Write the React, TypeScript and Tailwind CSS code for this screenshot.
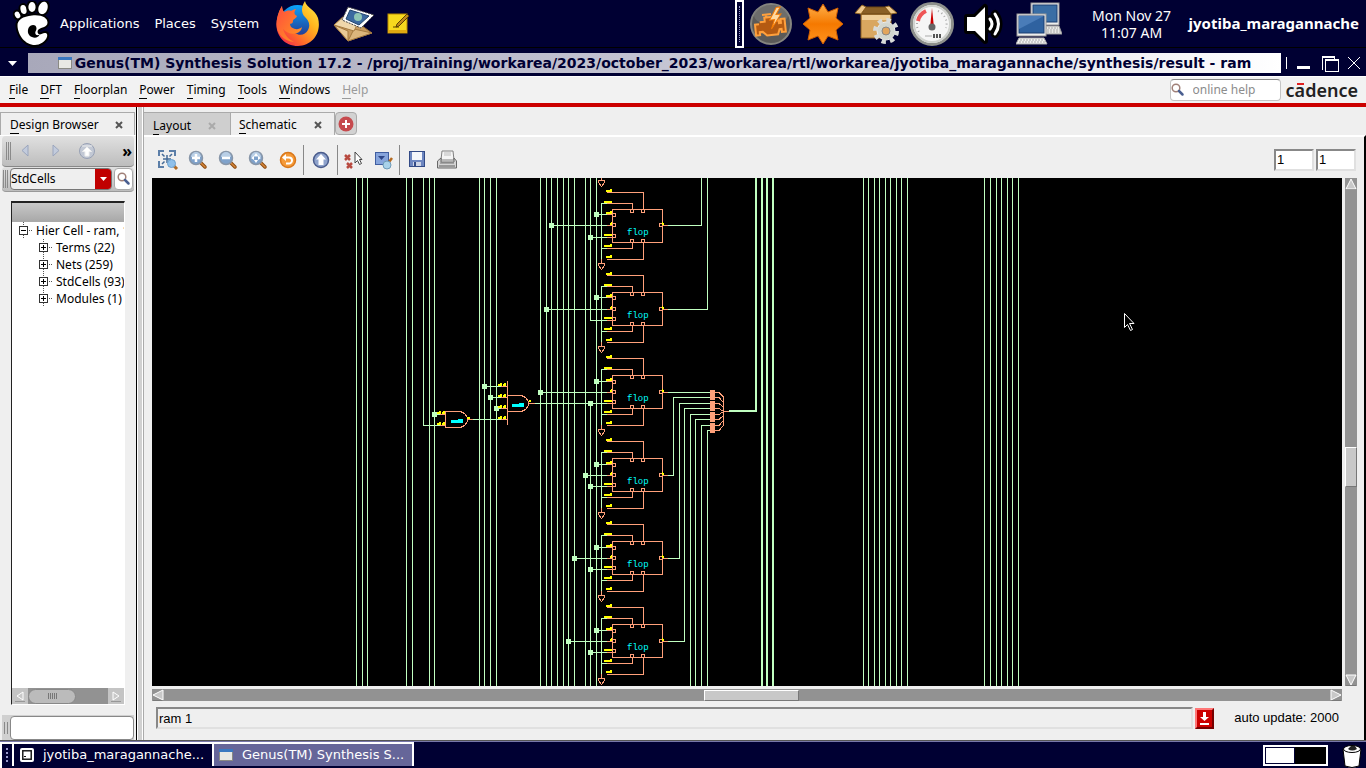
import React from "react";

const NET = "#c0ffc0";
const CELL = "#ffa07a";

/* ---------- Desktop panel icons ---------- */

const Foot = () => (
  <svg width="38" height="46" viewBox="0 0 38 46" aria-hidden="true">
    <g fill="#fff" stroke="#000" strokeWidth="4" strokeLinejoin="round" paintOrder="stroke">
      <ellipse cx="4.500" cy="14" rx="2.600" ry="3.600" transform="rotate(-25 4.500 14)" />
      <ellipse cx="10.500" cy="8.500" rx="3" ry="4.500" transform="rotate(-12 10.500 8.500)" />
      <ellipse cx="19" cy="6" rx="3.600" ry="5" />
      <ellipse cx="30" cy="7" rx="4.500" ry="6.500" transform="rotate(18 30 7)" />
      <path d="M19 14.500c10-1 15.500 2.500 15.500 7 0 5-6 4.500-9 7-1.500 1.500-1 3.500 0 4.500 2 1.500 4-1.500 7-1 4.500 1 0 11.500-10.500 12C12 44 5 34 4.500 25 4 19 10 15.300 19 14.500z" />
    </g>
    <path d="M15.500 27c2-4 8-4 8 .5 0 2-2 3.500-1 5.500 1 1.500 3 1.500 4 .5-1 4-7 4-10 1-2-2-2-5-1-7.500z" fill="#000" />
  </svg>
);

const Firefox = () => (
  <svg width="46" height="46" viewBox="0 0 46 46" aria-hidden="true">
    <defs>
      <linearGradient id="ffb" x1="0" y1="0" x2="0" y2="1">
        <stop offset="0" stopColor="#0aa2fa" /><stop offset="1" stopColor="#2b2a80" />
      </linearGradient>
      <linearGradient id="fff" x1="1" y1="0" x2="0" y2="1">
        <stop offset="0" stopColor="#fff04a" /><stop offset=".35" stopColor="#ffb41e" />
        <stop offset=".65" stopColor="#ff6a2a" /><stop offset="1" stopColor="#ee1358" />
      </linearGradient>
      <linearGradient id="ffl" x1="0" y1="0" x2="1" y2="1">
        <stop offset="0" stopColor="#ff4b3e" /><stop offset="1" stopColor="#ff9a20" />
      </linearGradient>
    </defs>
    <circle cx="22.500" cy="22" r="18" fill="url(#ffb)" />
    <path d="M30 0c1 7 10 8 13 17 4 15-6 28-20 28S1 34 1.500 23c.5-9 3-14 5.500-18 0 3 1 5 2 6l6 12c2 12 14 14 18 6 3-6 0-10-3-13-4-4-4-10 0-16z" fill="url(#fff)" />
    <path d="M1.500 23C2 14 5 9 7 5c0 3 1 5 2 6 2-1 5-2 7-1 2-1 3-2 5-2-3 4-1 6 1 7-1 3-4 3-4 5 0 2-1 3-4 3 2 5 9 7 13 3-1 8-13 9-19 2 2 6 5 10 11 13C8 40 1.500 32 1.500 23z" fill="url(#ffl)" />
  </svg>
);

const Mail = () => (
  <svg width="42" height="36" viewBox="0 0 42 36" aria-hidden="true">
    <path d="M1 19L14 9l25 18-24 8z" fill="#c79b5f" stroke="#8a6430" />
    <path d="M1 19l14 6 0 10z" fill="#e9c996" stroke="#a57a40" />
    <path d="M15 35l6-12 18 4z" fill="#dcb67c" stroke="#a57a40" />
    <path d="M1 19L12 9l13 8-4 8z" fill="#f0d7aa" stroke="#a57a40" />
    <path d="M15 1l26 8-13 13-19-8z" fill="#fff" stroke="#444" strokeDasharray="2 1" />
    <path d="M17 4l19 6-10 9-13-6z" fill="#3c6aa0" stroke="#23456e" />
    <circle cx="25" cy="11" r="4" fill="#8fc6b4" />
  </svg>
);

const Note = () => (
  <svg width="22" height="22" viewBox="0 0 22 22" aria-hidden="true">
    <rect x="1" y="1" width="19" height="19" fill="#f6d91e" stroke="#b98b00" />
    <rect x="1" y="17" width="19" height="3" fill="#e0a910" />
    <path d="M6 14h6M20 1L10 11l-1 3 3-1L22 3z" stroke="#5a4300" fill="#c28b1c" />
  </svg>
);

const Engine = () => (
  <svg width="42" height="42" viewBox="0 0 42 42" aria-hidden="true">
    <circle cx="21" cy="21" r="20" fill="#5b5a58" stroke="#85857f" strokeWidth="2" />
    <ellipse cx="21" cy="12" rx="17" ry="10" fill="#7a7a78" opacity=".6" />
    <g transform="rotate(-6 21 21)">
      <path d="M10 18h5v-4h8l3 4h3v3h2v-4h4v13h-4v-3h-2l-2 5H16l-4-4H9v3H5V20h4M13 11h9M17 11v3" fill="#b45a12" stroke="#ffa03c" strokeWidth="2" />
      <path d="M28 5l-8 12h5l-4 9 11-14h-5l5-7z" fill="#ffd9a0" stroke="#f57900" />
    </g>
  </svg>
);

const Burst = () => (
  <svg width="42" height="42" viewBox="0 0 42 42" aria-hidden="true">
    <defs><linearGradient id="burst" x1="0" y1="0" x2="0" y2="1"><stop offset="0" stopColor="#ffb04a" /><stop offset=".5" stopColor="#f57900" /><stop offset="1" stopColor="#ff9420" /></linearGradient></defs>
    <path d="M21 1l5 8 10-4-2 10 7 6-7 6 2 10-10-4-5 8-5-8-10 4 2-10-7-6 7-6L6 5l10 4z" fill="url(#burst)" stroke="#ce5c00" />
  </svg>
);

const Package = () => (
  <svg width="46" height="40" viewBox="0 0 46 40" aria-hidden="true">
    <path d="M7 10h30v22l-4 2H7z" fill="#d9a760" stroke="#8f6322" />
    <path d="M7 10l5-7h19l6 7z" fill="#8a6026" stroke="#6d4712" />
    <path d="M12 3L8 1 1 9l6 1zM31 3l4-1 8 7-6 1z" fill="#efc98d" stroke="#8f6322" />
    <path d="M8 11h28v5H8z" fill="#f0cf98" />
    <g transform="translate(32 27)">
      <circle r="9" fill="#d3d7cf" stroke="#eee" />
      <circle r="10.500" fill="none" stroke="#d9dbd8" strokeWidth="5" strokeDasharray="4.200 4.050" />
      <circle r="4" fill="#e2a55c" stroke="#888" />
    </g>
  </svg>
);

const Gauge = () => (
  <svg width="44" height="44" viewBox="0 0 44 44" aria-hidden="true">
    <circle cx="22" cy="22" r="20.500" fill="#f6f6f6" stroke="#8e908c" strokeWidth="3" />
    <circle cx="22" cy="22" r="18" fill="none" stroke="#d0d2ce" strokeWidth="2" />
    <path d="M8 19a14 14 0 0 1 8-10" fill="none" stroke="#e55" strokeWidth="4" />
    <path d="M28 9a14 14 0 0 1 8 17M7 21a15 15 0 0 0 2 9" fill="none" stroke="#aaa" strokeWidth="2" strokeDasharray="1 3" />
    <path d="M22 6l2 20h-4z" fill="#c00" />
    <circle cx="22" cy="25" r="3.500" fill="#666" />
    <path d="M15 34h7" stroke="#aaa" /><path d="M23 34h9" stroke="#555" strokeWidth="4" strokeDasharray="2 1" />
  </svg>
);

const Speaker = () => (
  <svg width="42" height="44" viewBox="0 0 42 44" aria-hidden="true">
    <path d="M3 15h8L21 5v34L11 29H3z" fill="#fff" stroke="#000" strokeWidth="6" paintOrder="stroke" strokeLinejoin="round" />
    <g fill="none" stroke="#000" strokeWidth="8" strokeLinecap="round"><path d="M26 17q4 5 0 10M31 12q7 10 0 20" /></g>
    <g fill="none" stroke="#fff" strokeWidth="3" strokeLinecap="round"><path d="M26 17q4 5 0 10M31 12q7 10 0 20" /></g>
  </svg>
);

const Network = () => (
  <svg width="46" height="44" viewBox="0 0 46 44" aria-hidden="true">
    <rect x="15" y="1" width="28" height="22" fill="#eee" stroke="#999" />
    <rect x="17" y="3" width="24" height="17" fill="#3a6ea5" stroke="#1c3f70" />
    <path d="M19 24h24l3 8H17z" fill="#e8e8e6" stroke="#999" />
    <path d="M20 26h22M19 28h25M19 30h26" stroke="#aaa" strokeDasharray="2 1" />
    <rect x="1" y="12" width="29" height="22" fill="#eee" stroke="#999" />
    <rect x="3" y="14" width="25" height="17" fill="#2f62a0" stroke="#1c3f70" />
    <path d="M3 14h25L3 27z" fill="#4a7cb8" />
    <path d="M3 36h25l3 6H0z" fill="#f2f2f0" stroke="#aaa" />
    <path d="M4 38h24M3 40h26" stroke="#aaa" strokeDasharray="2 1" />
  </svg>
);

const AppIcon = () => (
  <svg width="14" height="12" viewBox="0 0 14 12" className="shrink-0" aria-hidden="true">
    <rect x="0.500" y="0.500" width="13" height="11" fill="#e8e8e4" stroke="#8a8a84" />
    <rect x="0" y="0" width="14" height="3" fill="#3a78c0" />
  </svg>
);

/* ---------- Toolbar icons ---------- */

const Lens = ({ children }: { children?: React.ReactNode }) => (
  <svg width="20" height="20" viewBox="0 0 20 20" aria-hidden="true">
    <path d="M12 12l5 5" stroke="#8a4a10" strokeWidth="3.500" strokeLinecap="round" />
    <path d="M13 13l4 4" stroke="#d8883a" strokeWidth="1.500" strokeLinecap="round" />
    <circle cx="8" cy="8" r="6.500" fill="#7fa2cb" stroke="#8896a8" strokeWidth="1.500" />
    <path d="M3 7a5 5 0 0 1 10 0z" fill="#b9cfe6" />
    {children}
  </svg>
);

const FitIcon = () => (
  <svg width="22" height="22" viewBox="0 0 22 22" aria-hidden="true">
    <path d="M2 7V2h5M12 2h6v5M2 12v6h5" fill="none" stroke="#5b7ea8" strokeWidth="2" />
    <path d="M10 6v8M6 10h8M5 5l2.500 2.500M15 5l-2.500 2.500M5 15l2.500-2.500" stroke="#466c98" strokeWidth="1.500" fill="none" />
    <path d="M17 17l3 3" stroke="#b06a24" strokeWidth="3" />
    <circle cx="14.500" cy="14.500" r="4" fill="#8fc0ea" stroke="#6b9fcc" />
  </svg>
);

const UndoIcon = () => (
  <svg width="18" height="18" viewBox="0 0 18 18" aria-hidden="true">
    <circle cx="9" cy="9" r="7.500" fill="#f59a38" stroke="#d9771a" strokeWidth="1.500" />
    <path d="M5 6.500h5a3 3 0 0 1 0 6H7" fill="none" stroke="#fff" strokeWidth="2" />
    <path d="M3 6.500L7 3v7z" fill="#fff" />
  </svg>
);

const UpIcon = () => (
  <svg width="18" height="18" viewBox="0 0 18 18" aria-hidden="true">
    <circle cx="9" cy="9" r="7.500" fill="#8fa3cc" stroke="#4a5c8c" strokeWidth="1.500" />
    <path d="M9 3l5 5.500h-2.500V14h-5V8.500H4z" fill="#fff" />
  </svg>
);

const DeselectIcon = () => (
  <svg width="20" height="20" viewBox="0 0 20 20" aria-hidden="true">
    <path d="M2 5l5 5M7 5l-5 5M4 13l5 5M9 13l-5 5" stroke="#b84a40" strokeWidth="2.500" />
    <path d="M12 2v11l2.500-2.500 2 4 2-1-2-4H19z" fill="#fff" stroke="#444" />
  </svg>
);

const FindIcon = () => (
  <svg width="20" height="20" viewBox="0 0 20 20" aria-hidden="true">
    <rect x="2.500" y="2.500" width="13" height="12" fill="#86a4dc" stroke="#3f5da0" />
    <path d="M5 6h7l-3.500 4z" fill="#2d4688" />
    <path d="M16 12l3-4" stroke="#b46a20" strokeWidth="2.500" />
    <circle cx="14" cy="15" r="4" fill="#a9d2ea" stroke="#6f9bb8" />
  </svg>
);

const SaveIcon = () => (
  <svg width="18" height="18" viewBox="0 0 18 18" aria-hidden="true">
    <rect x="1.500" y="1.500" width="15" height="15" fill="#6d86c0" stroke="#324a86" />
    <rect x="4" y="2" width="10" height="8" fill="#f4f6fb" />
    <rect x="5" y="12" width="8" height="4" fill="#cdd4e6" /><rect x="6" y="12" width="2" height="4" fill="#324a86" />
  </svg>
);

const PrintIcon = () => (
  <svg width="22" height="20" viewBox="0 0 22 20" aria-hidden="true">
    <path d="M6 1h11l1 9H5z" fill="#f4f4f4" stroke="#808080" />
    <path d="M8 3h7M8 5h7" stroke="#bbb" />
    <path d="M1.500 11L5 8v4h13V8l2.500 3v7h-19z" fill="#d4d4d4" stroke="#686868" />
    <path d="M4 13h14" stroke="#777" /><path d="M3 16h16" stroke="#999" strokeWidth="2" />
  </svg>
);

const MiniLens = () => (
  <svg width="14" height="14" viewBox="0 0 14 14" className="shrink-0" aria-hidden="true">
    <circle cx="5" cy="5" r="3.800" fill="#fff" stroke="#a08078" strokeWidth="1.500" />
    <path d="M8 8l3.500 3.500" stroke="#4a5f90" strokeWidth="2.500" strokeLinecap="round" />
  </svg>
);

const Cross = ({ className }: { className: string }) => (
  <svg width="8" height="8" viewBox="0 0 8 8" className={className} aria-hidden="true">
    <path d="M1 1l6 6M7 1L1 7" stroke="currentColor" strokeWidth="2" />
  </svg>
);

/* ---------- Schematic ---------- */

const H = ({ x, y, to, c = NET, h = 1 }: { x: number; y: number; to: number; c?: string; h?: number }) => (
  <rect x={x} y={y} width={to - x + 1} height={h} fill={c} />
);
const V = ({ x, y = 0, to = 3000, c = NET, w = 1 }: { x: number; y?: number; to?: number; c?: string; w?: number }) => (
  <rect x={x} y={y} width={w} height={to - y + 1} fill={c} />
);
const Dot = ({ x, y }: { x: number; y: number }) => <rect x={x - 2} y={y - 2} width="5" height="5" fill={NET} />;

/* Miniature pin label */
const Pin = ({ x, y, w = 6 }: { x: number; y: number; w?: number }) => (
  <path d={`M${x} ${y + 1}h${w}v2h-${w}zM${x + w - 2} ${y}h2v1h-2z`} fill="#ffff00" />
);

const Ground = ({ y }: { y: number }) => (
  <path d={`M598.500 ${y + 0.5}h6v2l-3 4-3-4z`} fill="none" stroke={CELL} />
);

type FlopProps = { t: number; mid: number; from: number; clk: number; low: number; dotLow: boolean };

const Flop = ({ t, mid, from, clk, low, dotLow }: FlopProps) => (
  <g>
    <H x={607} y={t - 17} to={643} c={CELL} />
    <V x={643} y={t - 17} to={t} c={CELL} />
    <Pin x={606} y={t - 20} />
    <H x={601} y={t - 6} to={606} />
    <H x={607} y={t - 6} to={632} c={CELL} />
    <V x={632} y={t - 6} to={t} c={CELL} />
    <H x={604} y={t - 8} to={611} c="#ffff00" h={2} />
    <V x={601} y={t - 6} to={t + 50} />
    <V x={601} y={t + 50} to={t + 54} c={CELL} />
    <H x={596} y={clk} to={606} />
    <H x={607} y={clk} to={612} c={CELL} />
    <Pin x={606} y={clk - 3} />
    <Dot x={596} y={clk} />
    <H x={from} y={mid} to={606} />
    <H x={607} y={mid} to={612} c={CELL} />
    <path d={`M611 ${mid - 3}h1v3h-2v-2h1z`} fill="#ffff00" />
    <Dot x={from} y={mid} />
    <H x={590} y={low} to={606} />
    <H x={607} y={low} to={612} c={CELL} />
    <H x={604} y={low - 3} to={611} c="#ffff00" h={2} />
    {dotLow && <Dot x={590} y={low} />}
    <H x={601} y={t + 39} to={606} />
    <H x={607} y={t + 39} to={632} c={CELL} />
    <V x={632} y={t + 33} to={t + 39} c={CELL} />
    <Pin x={604} y={t + 35} w={8} />
    <H x={607} y={t + 50} to={643} c={CELL} />
    <V x={643} y={t + 33} to={t + 50} c={CELL} />
    <Pin x={606} y={t + 46} />
    <g fill="none" stroke={CELL}>
      <rect x="612.500" y={t + 0.5} width="50" height="33" />
      <rect x="630.500" y={t + 0.5} width="3" height="3" />
      <rect x="641.500" y={t + 0.5} width="3" height="3" />
      <rect x="630.500" y={t + 30.5} width="3" height="3" />
      <rect x="641.500" y={t + 30.5} width="3" height="3" />
      <rect x="612.500" y={clk - 0.5} width="3" height="3" />
      <rect x="612.500" y={mid - 1.5} width="3" height="3" />
      <rect x="612.500" y={low - 2.5} width="3" height="3" />
      <rect x="659.500" y={mid - 1.5} width="3" height="3" />
    </g>
    <H x={662} y={mid} to={667} c={CELL} />
    <path d={`M662 ${mid - 3}h1v1h1v2h-2z`} fill="#ffff00" />
    <text x="627" y={t + 26} fill="#00ffff" className="font-['Liberation_Mono',monospace] text-[9px]">flop</text>
    <Ground y={t + 54} />
  </g>
);

const flops: FlopProps[] = [
  { t: 209, mid: 225, from: 551, clk: 214, low: 237, dotLow: true },
  { t: 292, mid: 309, from: 546, clk: 297, low: 320, dotLow: false },
  { t: 375, mid: 392, from: 540, clk: 381, low: 403, dotLow: true },
  { t: 458, mid: 475, from: 585, clk: 464, low: 486, dotLow: true },
  { t: 541, mid: 558, from: 574, clk: 547, low: 569, dotLow: true },
  { t: 624, mid: 641, from: 568, clk: 630, low: 652, dotLow: true },
];

const wires = [
  356, 362, 367, 406, 412, 429, 434, 479, 484, 490, 496, 540, 546, 551, 557, 563, 568, 574, 585, 596,
  863, 868, 874, 879, 885, 890, 896, 901, 907, 984, 990, 996, 1001, 1007, 1012, 1018,
];

const Schematic = () => (
  <svg className="block h-full w-full bg-black" shapeRendering="crispEdges" role="img" aria-label="ram schematic">
    <g transform="translate(-152 -178)">
      {wires.map((x) => <V key={x} x={x} />)}
      <V x={423} to={425} />
      <V x={590} to={320} />
      <V x={590} y={403} />
      <V x={755} to={411} w={2} />
      <V x={761} w={2} /><V x={766} w={2} /><V x={772} w={2} />

      <V x={601} to={180} c={CELL} />
      <Ground y={180} />
      {flops.map((f) => <Flop key={f.t} {...f} />)}

      <H x={668} y={225} to={701} /><V x={701} to={225} />
      <H x={668} y={309} to={707} /><V x={707} to={309} />
      <H x={668} y={392} to={710} />
      <H x={668} y={475} to={673} /><V x={673} y={397} to={475} /><H x={673} y={397} to={710} />
      <H x={668} y={558} to={679} /><V x={679} y={403} to={558} /><H x={679} y={403} to={710} />
      <H x={668} y={641} to={684} /><V x={684} y={408} to={641} /><H x={684} y={408} to={710} />
      <V x={690} y={414} /><H x={690} y={414} to={710} />
      <V x={695} y={419} /><H x={695} y={419} to={710} />
      <V x={701} y={425} /><H x={701} y={425} to={710} />
      <V x={707} y={430} /><H x={707} y={430} to={710} />

      <g fill={CELL}>
        <rect x="710" y="390" width="5" height="10" /><rect x="710" y="401" width="5" height="10" />
        <rect x="710" y="412" width="5" height="10" /><rect x="710" y="423" width="5" height="10" />
      </g>
      <path d="M715 392.500h4l4.500 4.500M715 397.500h4l4.500 5M715 403.500h4l4.500 4M715 408.500h4l4.500 3M715 414.500h4l4.500-3M715 419.500h4l4.500-4M715 425.500h4l4.500-5M715 430.500h4l4.500-5M723.500 397v28M723 411.500h6" fill="none" stroke={CELL} />
      <H x={729} y={410} to={756} h={2} />

      {/* two-input gate */}
      <H x={434} y={414} to={439} /><H x={440} y={414} to={445} c={CELL} /><Dot x={434} y={414} />
      <H x={423} y={425} to={439} /><H x={440} y={425} to={445} c={CELL} />
      <Pin x={437} y={411} w={4} /><Pin x={442} y={411} w={3} />
      <Pin x={437} y={422} w={4} /><Pin x={442} y={422} w={3} />
      <path d="M445.500 411.500h15l4 2 3 4v4l-3 4-4 2h-15z" fill="none" stroke={CELL} />
      <H x={467} y={419} to={472} c={CELL} /><H x={473} y={419} to={500} /><H x={501} y={419} to={507} c={CELL} />
      <rect x="467" y="417" width="3" height="2" fill="#ffff00" />
      <path d="M451 420h7v-1h5v4h-12z" fill="#00ffff" />

      {/* four-input gate */}
      {[[484, 386], [490, 397], [496, 408]].map(([x, y]) => (
        <g key={y}><H x={x} y={y} to={500} /><H x={501} y={y} to={507} c={CELL} /><Dot x={x} y={y} /></g>
      ))}
      {[386, 397, 408, 419].map((y) => (
        <g key={y}><Pin x={498} y={y - 3} w={4} /><Pin x={503} y={y - 3} w={3} /></g>
      ))}
      <V x={507} y={381} to={424} c={CELL} />
      <path d="M507.500 395.500h14l4 2 3 4v4l-3 4-4 2h-14z" fill="none" stroke={CELL} />
      <H x={528} y={403} to={534} c={CELL} /><H x={535} y={403} to={590} />
      <rect x="529" y="400" width="2" height="2" fill="#ffff00" />
      <path d="M512 404h7v-1h5v4h-12z" fill="#00ffff" />
    </g>
    {/* pointer */}
    <path transform="translate(972 135)" d="M0.500 0.500v14l3-3 3 6 2-1-3-6h4.500z" fill="#000" stroke="#fff" shapeRendering="auto" />
  </svg>
);

/* ---------- Panels ---------- */

const menus = ["File", "DFT", "Floorplan", "Power", "Timing", "Tools", "Windows"];
const cells = ["Terms (22)", "Nets (259)", "StdCells (93)", "Modules (1)"];

const Mnemonic = ({ text }: { text: string }) => (
  <span><span className="border-b border-current">{text[0]}</span>{text.slice(1)}</span>
);

const Box = ({ plus }: { plus: boolean }) => (
  <svg width="14" height="17" viewBox="0 0 14 17" className="shrink-0" shapeRendering="crispEdges" aria-hidden="true">
    <path d="M4.500 0v4M4.500 13v4M10 8.500h4" stroke="#555" strokeDasharray="1 1" />
    <rect x="0.500" y="4.500" width="8" height="8" fill="#fff" stroke="#333" />
    <path d={plus ? "M2 8.500h5M4.500 6v5" : "M2 8.500h5"} stroke="#000" />
  </svg>
);

const Arrow = ({ d }: { d: string }) => (
  <svg width="12" height="12" viewBox="0 0 12 12" className="shrink-0" aria-hidden="true">
    <path d={d} fill="#c8c8c8" stroke="#fff" />
    <path d="M1 11.500h10" stroke="#555" opacity=".4" />
  </svg>
);

const Grip = () => (
  <svg width="6" height="18" viewBox="0 0 6 18" className="shrink-0" shapeRendering="crispEdges" aria-hidden="true">
    <path d="M0.500 0v18M2.500 0v18M4.500 0v18" stroke="#8a8a8a" />
  </svg>
);

const TopPanel = () => (
  <header className="flex h-12 shrink-0 items-center border-b border-black bg-[#000033] text-white">
    <span className="ml-[13px]"><Foot /></span>
    <nav className="ml-[9px] flex gap-[15px] text-[13px]">
      <button>Applications</button><button>Places</button><button>System</button>
    </nav>
    <div className="ml-4 flex items-center gap-3">
      <Firefox /><Mail /><Note />
    </div>
    <div className="ml-auto flex items-center">
      <span className="flex h-12 w-[9px] justify-center border-2 border-white py-1"><span className="border-l border-dotted border-[#9999cc]" /></span>
      <div className="ml-[6px] flex items-center gap-[10px]">
        <Engine /><Burst /><Package /><Gauge /><Speaker /><Network />
      </div>
      <time className="ml-[30px] w-[80px] text-center font-['Noto_Sans',sans-serif] text-[14px] leading-[17px]">Mon Nov 27<br />11:07 AM</time>
      <span className="mr-[7px] ml-[17px] font-['Noto_Sans',sans-serif] text-[15px] font-bold">jyotiba_maragannache</span>
    </div>
  </header>
);

const TitleBar = () => (
  <div className="flex h-7 shrink-0 items-center bg-[#000033] pt-[2px]">
    <button aria-label="Window menu" className="flex w-7 justify-start pl-2">
      <svg width="9" height="5" viewBox="0 0 9 5"><path d="M0 0h9L4.500 5z" fill="#fff" /></svg>
    </button>
    <div className="flex h-5 min-w-0 flex-1 items-center justify-center gap-[3px] bg-linear-to-r from-[#a8a8ba] via-[#c4c4d2] to-white text-[14px] font-bold whitespace-nowrap text-[#000033]">
      <AppIcon />
      <h1>Genus(TM) Synthesis Solution 17.2 - /proj/Training/workarea/2023/october_2023/workarea/rtl/workarea/jyotiba_maragannache/synthesis/result - ram</h1>
    </div>
    <svg width="85" height="20" viewBox="0 0 85 20" shapeRendering="crispEdges" aria-label="Window controls">
      <path d="M5.500 4v12" stroke="#fff" />
      <path d="M16 13h13v3H16z" fill="#fff" />
      <path d="M41.500 17V3.500h12v3M44.500 6.500h13v12h-13z" fill="#000033" stroke="#fff" />
      <path d="M45 7.500h12M42 4.500h12" stroke="#fff" />
      <path d="M67 4l12 12M79 4L67 16" stroke="#fff" />
    </svg>
  </div>
);

const MenuBar = () => (
  <div className="flex h-[31px] shrink-0 items-center border-t border-b-4 border-t-white border-b-[#cc0000] bg-[#f2f2f2] pr-2 pl-[9px] text-[12px]">
    <nav className="flex gap-3">
      {menus.map((m) => <button key={m}><Mnemonic text={m} /></button>)}
      <button disabled className="text-[#9a9a9a]"><Mnemonic text="Help" /></button>
    </nav>
    <label className="ml-auto flex h-[22px] w-[111px] items-center rounded-sm border border-[#c4c4c4] border-t-[#888] bg-white">
      <MiniLens />
      <input aria-label="Online help" placeholder="online help" className="ml-2 w-full min-w-0 bg-transparent outline-none placeholder:text-[#8c8c8c]" />
    </label>
    <span className="ml-[5px] text-[18px] leading-[24px] font-semibold text-[#222]">
      c<span className="relative">a<span className="absolute top-[5px] left-[2px] h-[2px] w-[7px] bg-[#e02020]" /></span>dence
    </span>
  </div>
);

const Browser = () => (
  <aside className="flex w-[137px] shrink-0 flex-col border-r border-black pt-[5px]">
    <div className="mr-px flex h-[23px] items-center justify-between border border-b-0 border-[#aaa] pt-[2px] pr-[11px] pl-[9px] text-[12px]">
      <Mnemonic text="Design Browser" />
      <button aria-label="Close Design Browser"><Cross className="text-[#555]" /></button>
    </div>
    <div className="flex flex-1 flex-col border-t border-white px-[2px]">
      <div className="flex h-[31px] items-center rounded-sm border-b border-[#888] bg-linear-to-b from-[#e0e0e0] to-[#bdbdbd] pr-[2px] pl-1">
        <Grip />
        <svg width="76" height="18" viewBox="0 0 76 18" className="ml-2" aria-hidden="true">
          <path d="M8 3v11L2 8.500z" fill="#c2cbdc" stroke="#9aa5bd" />
          <path d="M33 3v11l6-5.500z" fill="#c2cbdc" stroke="#9aa5bd" />
          <circle cx="67" cy="9" r="7.500" fill="#c2c8d4" stroke="#98a1b5" />
          <path d="M67 5l4.500 4.500H69V14h-4V9.500h-2.500zM62 4h10" fill="#fff" stroke="#eee" />
        </svg>
        <button className="ml-auto text-[16px] font-bold">»</button>
      </div>
      <div className="flex h-[25px] items-center gap-px rounded-sm border-b border-[#999] bg-linear-to-b from-[#e0e0e0] to-[#bdbdbd] px-px">
        <Grip />
        <span className="mr-px flex h-[22px] flex-1 items-center overflow-hidden rounded border border-[#777] bg-[#efefef]">
          <select aria-label="Object type" className="min-w-0 flex-1 appearance-none bg-transparent text-[12px]"><option>StdCells</option></select>
          <span className="flex h-full w-4 items-center justify-center bg-[#c00000]"><svg width="7" height="4"><path d="M0 0h7L3.500 4z" fill="#fff" /></svg></span>
        </span>
        <button aria-label="Search" className="flex h-[22px] w-[19px] items-center justify-center rounded border border-[#aaa] bg-white"><MiniLens /></button>
      </div>
      <div className="mt-[9px] mr-[9px] ml-[9px] flex flex-1 flex-col border border-t-2 border-[#222] border-r-white border-b-white bg-white">
        <div className="h-[19px] border-b border-[#aaa] bg-linear-to-b from-[#c8c8c8] to-[#a9a9a9]" />
        <ul className="flex-1 overflow-hidden text-[12px] leading-[17px] whitespace-nowrap">
          <li className="flex gap-[3px] pl-[7px]"><Box plus={false} />Hier Cell - ram, 1</li>
          {cells.map((c) => <li key={c} className="flex gap-[3px] pl-[27px]"><Box plus />{c}</li>)}
        </ul>
        <div className="flex h-4 items-center bg-[#929292]">
          <span className="flex h-4 w-4 items-center justify-center bg-[#c4c4c4]"><Arrow d="M9 2v8L3 6z" /></span>
          <span className="flex h-[15px] w-12 items-center justify-center gap-px rounded-full border border-[#888] bg-[#bbb]">
            {[0, 1, 2, 3, 4].map((i) => <i key={i} className="h-[6px] w-px bg-[#777]" />)}
          </span>
          <span className="ml-auto flex h-4 w-4 items-center justify-center bg-[#c4c4c4]"><Arrow d="M3 2v8l6-4z" /></span>
        </div>
      </div>
      <div className="mt-[10px] flex h-[25px] items-center bg-[#d0d0d0]">
        <span className="mx-[2px] h-3 w-1 border-x border-[#888]" />
        <input aria-label="Filter" className="h-[24px] min-w-0 flex-1 rounded border border-[#888] bg-white" />
      </div>
    </div>
  </aside>
);

const tools: [string, React.ReactNode][] = [
  ["Fit", <FitIcon />],
  ["Zoom in", <Lens><path d="M8 4v8M4 8h8" stroke="#fff" strokeWidth="2.500" /></Lens>],
  ["Zoom out", <Lens><path d="M4 8h8" stroke="#fff" strokeWidth="2.500" /></Lens>],
  ["Zoom selection", <Lens><path d="M8 3l2 3H6zM8 13l2-3H6zM3 8l3-2v4zM13 8l-3-2v4z" fill="#fff" /></Lens>],
  ["Undo", <UndoIcon />],
];

const Separator = () => <span className="h-[30px] w-px bg-[#888]" />;
const Tool = ({ label, children }: { label: string; children: React.ReactNode }) => (
  <button aria-label={label} className="flex w-[30px] justify-center">{children}</button>
);

const Workspace = () => (
  <main className="flex min-w-0 flex-1 flex-col border-l border-[#aaa] pt-[5px]">
    <div className="flex h-[23px] items-stretch text-[12px]">
      <div className="flex w-[87px] items-center justify-between border-t border-r border-[#aaa] bg-[#cfcfcf] pt-[3px] pr-[14px] pl-[9px]">
        <Mnemonic text="Layout" /><button aria-label="Close Layout"><Cross className="text-[#aaa]" /></button>
      </div>
      <div className="flex w-[104px] items-center justify-between border-t border-r border-[#aaa] pt-[2px] pr-3 pl-2">
        <Mnemonic text="Schematic" /><button aria-label="Close Schematic"><Cross className="text-[#555]" /></button>
      </div>
      <button aria-label="Add tab" className="flex w-[22px] items-center justify-center rounded border border-[#aaa] bg-[#d2d2d2]">
        <svg width="16" height="16" viewBox="0 0 16 16"><circle cx="8" cy="8" r="7.500" fill="#c64a4e" /><path d="M8 4v8M4 8h8" stroke="#fff" strokeWidth="2" /></svg>
      </button>
    </div>
    <div className="flex min-h-0 flex-1 flex-col border-t-2 border-r-2 border-t-white border-r-black pr-[7px] pl-2">
      <div className="flex h-[41px] shrink-0 items-center pt-1 pl-px">
        {tools.map(([label, icon]) => <Tool key={label} label={label}>{icon}</Tool>)}
        <Separator />
        <span className="ml-[2px] flex"><Tool label="Up"><UpIcon /></Tool></span>
        <span className="ml-px flex"><Separator /></span>
        <Tool label="Deselect"><DeselectIcon /></Tool>
        <Tool label="Find"><FindIcon /></Tool>
        <span className="ml-px flex"><Separator /></span>
        <span className="ml-[2px] flex"><Tool label="Save"><SaveIcon /></Tool><Tool label="Print"><PrintIcon /></Tool></span>
        <div className="mr-px ml-auto flex gap-[2px] font-['Liberation_Sans',sans-serif] text-[13px]">
          <input aria-label="Page" defaultValue="1" className="h-[22px] w-10 border-2 border-[#e0e0e0] border-t-[#888] border-l-[#888] bg-white px-px" />
          <input aria-label="Pages" defaultValue="1" className="h-[22px] w-10 border-2 border-[#e0e0e0] border-t-[#888] border-l-[#888] bg-white px-px" />
        </div>
      </div>
      <div className="flex min-h-0 flex-1 gap-[3px]">
        <div className="min-w-0 flex-1 overflow-hidden"><Schematic /></div>
        <div className="flex w-3 flex-col bg-[#929292]">
          <Arrow d="M6 1l5 10H1z" />
          <span className="flex-[257]" />
          <div className="h-10 border border-[#777] border-t-white border-l-white bg-[#c8c8c8]" />
          <span className="flex-[187]" />
          <Arrow d="M1 1h10L6 11z" />
        </div>
      </div>
      <div className="mt-[3px] mr-[15px] flex h-3 shrink-0 items-center bg-[#929292]">
        <Arrow d="M11 1v10L1 6z" />
        <span className="flex-[540]" />
        <div className="h-[11px] w-[95px] border border-[#777] border-t-white border-l-white bg-[#c8c8c8]" />
        <span className="flex-[531]" />
        <Arrow d="M1 1v10l10-5z" />
      </div>
      <div className="flex h-[39px] shrink-0 items-center pb-[5px] pl-1 font-['Liberation_Sans',sans-serif] text-[13px]">
        <input aria-label="Status" defaultValue="ram 1" className="h-[22px] min-w-0 flex-1 border-2 border-[#e0e0e0] border-t-[#888] border-l-[#888] bg-[#efefef] px-px" />
        <button aria-label="Download" className="ml-[2px] flex h-[21px] w-[19px] items-center justify-center border-2 border-[#700] border-t-[#f77] border-l-[#f77] bg-[#cc0000]">
          <svg width="11" height="13" viewBox="0 0 11 13" fill="#fff"><path d="M4 0h3v5h3L5.500 9 1 5h3zM1 11h9v2H1z" /></svg>
        </button>
        <span className="mr-[18px] ml-[20px]">auto update: 2000</span>
      </div>
    </div>
  </main>
);

const Taskbar = () => (
  <footer className="flex h-[27px] shrink-0 items-end border-t border-[#7777aa] bg-[#000033] text-[13px] text-white">
    <div className="flex h-[26px] min-w-0 border-t-2 border-l-2 border-white pb-[2px]">
      <span className="flex w-[10px] justify-center py-1"><span className="border-l-2 border-dotted border-[#9999cc]" /></span>
      <button className="flex w-[200px] items-center gap-[9px] border-l-2 border-white bg-[#000033] pl-[6px] text-left whitespace-nowrap">
        <svg width="14" height="14" viewBox="0 0 14 14"><rect x="1" y="1" width="12" height="12" rx="1" fill="#333" stroke="#fff" strokeWidth="2" /><rect x="3" y="3" width="8" height="8" fill="#fff" stroke="#111" /><path d="M4 8h2v1H4z" fill="#111" /></svg>
        <span>jyotiba_maragannache...</span>
      </button>
      <button className="flex w-[202px] items-center gap-[9px] border-x-2 border-white bg-[#666699] pl-[5px] text-left whitespace-nowrap">
        <AppIcon /><span>Genus(TM) Synthesis S...</span>
      </button>
    </div>
    <div className="mr-[14px] mb-[2px] ml-auto flex h-[21px] w-[65px] border-2 border-white bg-black">
      <span className="w-[30px] border border-[#000033] bg-white" />
    </div>
    <svg width="20" height="24" viewBox="0 0 20 24" className="mr-[4px]" aria-label="Trash">
      <path d="M1 5l2 17q7 3 14 0l2-17z" fill="#fff" stroke="#000" />
      <ellipse cx="10" cy="5" rx="8.500" ry="3.500" fill="#fff" stroke="#000" />
      <path d="M6 5l3-3h4l2 3q-5 3-9 0z" fill="#222" />
    </svg>
  </footer>
);

export default function App() {
  return (
    <div className="flex h-screen flex-col overflow-hidden bg-[#efefef] font-['DejaVu_Sans',sans-serif] text-black">
      <TopPanel />
      <TitleBar />
      <div className="flex min-h-0 flex-1 flex-col font-['Noto_Sans',sans-serif]">
        <MenuBar />
        <div className="flex min-h-0 flex-1 border-b border-[#555]">
          <Browser />
          <div className="w-[6px] shrink-0 border-x border-white bg-[#d0d0d0]" />
          <Workspace />
        </div>
      </div>
      <Taskbar />
    </div>
  );
}
